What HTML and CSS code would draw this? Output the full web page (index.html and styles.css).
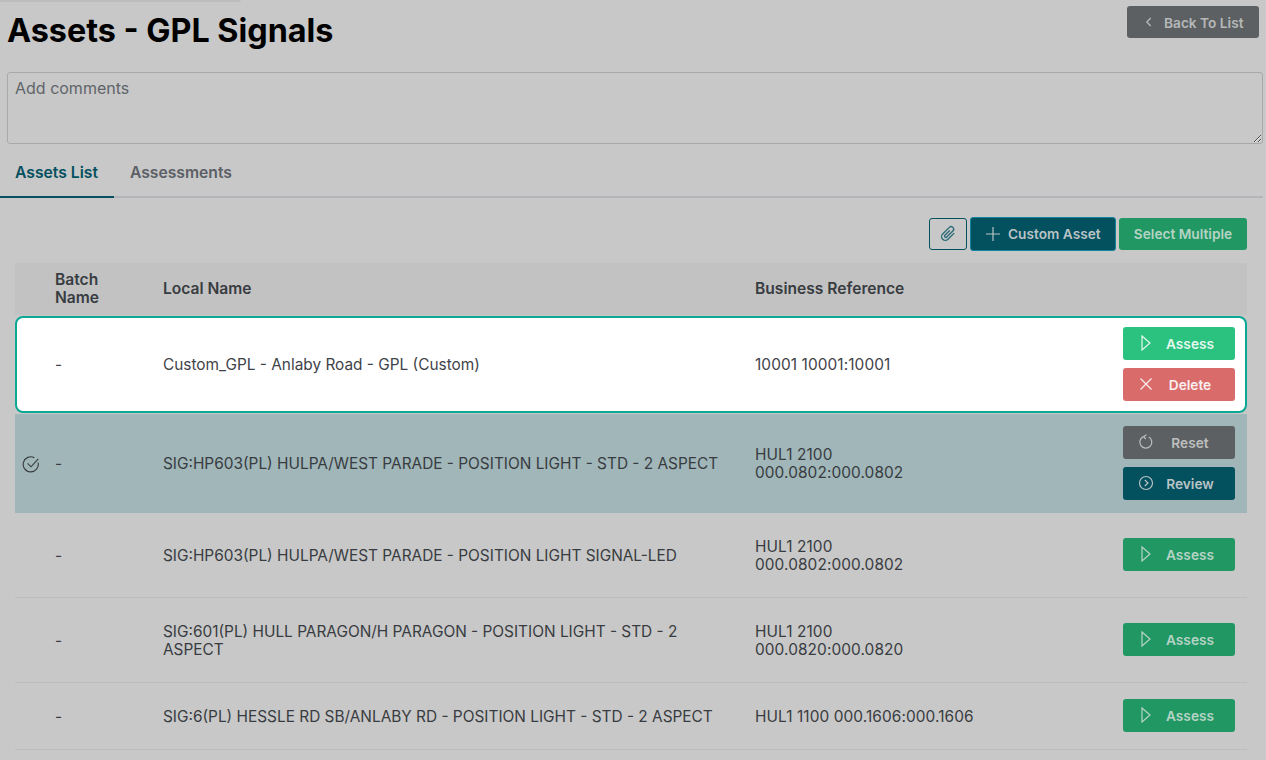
FILE: index.html
```html
<!DOCTYPE html>
<html lang="en">
<head>
<meta charset="utf-8">
<title>Assets - GPL Signals</title>
<link rel="stylesheet" href="styles.css">
</head>
<body>
<div class="topline"></div>
<header class="head">
  <h1>Assets - GPL Signals</h1>
  <button class="btn btn-back"><svg class="ic" viewBox="0 0 16 16"><path d="M10 3.500 5.500 8l4.500 4.500"/></svg><span>Back To List</span></button>
</header>
<div class="comment-wrap"><textarea class="comment" placeholder="Add comments"></textarea></div>
<nav class="tabs">
  <a class="tab active">Assets List</a>
  <a class="tab">Assessments</a>
</nav>
<div class="toolbar">
  <button class="btn btn-clip"><svg viewBox="0 0 16 16" class="clip"><path transform="rotate(45 8 8)" d="M11 4v7a3 3 0 0 1-6 0V3.500a2 2 0 0 1 4 0v7a1 1 0 0 1-2 0V5"/></svg></button>
  <button class="btn btn-custom"><svg class="ic plus" viewBox="0 0 16 16"><path d="M8 1v14M1 8h14"/></svg><span>Custom Asset</span></button>
  <button class="btn btn-multi">Select Multiple</button>
</div>
<section class="table">
  <div class="row row-head">
    <div></div><div>Batch<br>Name</div><div>Local Name</div><div>Business Reference</div><div></div>
  </div>
  <div class="row row-custom">
    <div></div><div>-</div><div>Custom_GPL - Anlaby Road - GPL (Custom)</div><div class="ref">10001 10001:10001</div>
    <div class="actions">
      <button class="btn act btn-assess-on"><svg class="ic" viewBox="0 0 16 16"><path d="M4 1 12 8l-8 7z"/></svg><span>Assess</span></button>
      <button class="btn act btn-delete"><svg class="ic" viewBox="0 0 16 16"><path d="M2.500 2.500l11 11M13.500 2.500l-11 11"/></svg><span>Delete</span></button>
    </div>
  </div>
  <div class="row row-done">
    <div class="check"><svg viewBox="0 0 16 16"><path d="M14.300 6.800A6.700 6.700 0 1 1 11 2.400"/><path d="M5 7.500l3 3 6.500-7"/></svg></div><div>-</div><div>SIG:HP603(PL) HULPA/WEST PARADE - POSITION LIGHT - STD - 2 ASPECT</div><div class="ref">HUL1 2100<br>000.0802:000.0802</div>
    <div class="actions">
      <button class="btn act btn-reset"><svg class="ic" viewBox="0 0 16 16"><path d="M10.800 2.900A6 6 0 1 1 5.400 2.600"/><path d="M8.500 0.800 5.700 2.600 7.800 5"/></svg><span>Reset</span></button>
      <button class="btn act btn-review"><svg class="ic" viewBox="0 0 16 16"><circle cx="8" cy="8" r="6.500"/><path d="M6.800 5 10 8l-3.200 3"/></svg><span>Review</span></button>
    </div>
  </div>
  <div class="row row-a">
    <div></div><div>-</div><div>SIG:HP603(PL) HULPA/WEST PARADE - POSITION LIGHT SIGNAL-LED</div><div class="ref">HUL1 2100<br>000.0802:000.0802</div>
    <div class="actions"><button class="btn act btn-assess"><svg class="ic" viewBox="0 0 16 16"><path d="M4 1 12 8l-8 7z"/></svg><span>Assess</span></button></div>
  </div>
  <div class="row row-a">
    <div></div><div>-</div><div>SIG:601(PL) HULL PARAGON/H PARAGON - POSITION LIGHT - STD - 2 ASPECT</div><div class="ref">HUL1 2100<br>000.0820:000.0820</div>
    <div class="actions"><button class="btn act btn-assess"><svg class="ic" viewBox="0 0 16 16"><path d="M4 1 12 8l-8 7z"/></svg><span>Assess</span></button></div>
  </div>
  <div class="row row-b">
    <div></div><div>-</div><div>SIG:6(PL) HESSLE RD SB/ANLABY RD - POSITION LIGHT - STD - 2 ASPECT</div><div class="ref">HUL1 1100 000.1606:000.1606</div>
    <div class="actions"><button class="btn act btn-assess"><svg class="ic" viewBox="0 0 16 16"><path d="M4 1 12 8l-8 7z"/></svg><span>Assess</span></button></div>
  </div>
</section>
</body>
</html>
```

FILE: styles.css
```css
* { box-sizing: border-box; }
html, body { height: 100%; }
body {
  margin: 0;
  background: #c8c8c8;
  font-family: Inter, "Liberation Sans", sans-serif;
  font-size: 15.400px;
  line-height: 18px;
  color: #383c41;
  overflow: hidden;
}
.topline { width: 241px; height: 2px; background: #bdbdbd; border-radius: 0 0 2px 0; }
.head {
  display: flex;
  justify-content: space-between;
  align-items: flex-start;
  padding: 4px 7px 0 7px;
  height: 70px;
}
h1 {
  margin: 7px 0 0;
  font-size: 32.300px;
  line-height: 36px;
  font-weight: 700;
  color: #000;
}
.btn {
  display: flex;
  align-items: center;
  border: 0;
  border-radius: 3px;
  font-family: inherit;
  font-size: 13.700px;
  font-weight: 600;
  line-height: 16px;
  padding: 0;
}
.ic { width: 16px; height: 16px; flex: none; fill: none; stroke: currentColor; stroke-width: 1.200; }
.btn-back {
  width: 132px;
  height: 32px;
  background: #5c6062;
  color: #b6b8b9;
  padding-left: 15px;
  gap: 8px;
}
.btn-back span { position: relative; top: 1px; }
.btn-back .ic { width: 14px; height: 14px; stroke-width: 1.500; }
.comment-wrap { padding: 0 3px 0 7px; height: 72px; }
.comment {
  display: block;
  width: 100%;
  height: 72px;
  background: transparent;
  border: 1px solid #a9a9a9;
  border-radius: 3px;
  padding: 6px 7px;
  font-family: inherit;
  font-size: 16px;
  line-height: 18px;
  color: #5b6066;
}
.comment::placeholder { color: #5f6468; opacity: 1; }
.tabs {
  display: flex;
  margin: 10px 3px 0 0;
  height: 44px;
  border-bottom: 2px solid #b3b5b8;
}
.tab {
  height: 44px;
  padding: 10px 15px 0;
  margin-right: 1px;
  font-size: 15.700px;
  font-weight: 600;
  line-height: 18px;
  color: #5b6066;
}
.tab.active { color: #03505f; border-bottom: 2px solid #03505f; padding-right: 16px; }
.toolbar {
  display: flex;
  justify-content: flex-end;
  align-items: center;
  gap: 3px;
  padding: 7px 19px 0 0;
  height: 65px;
}
.btn-clip {
  width: 38px;
  height: 32px;
  justify-content: center;
  background: transparent;
  border: 1px solid #03505f;
  color: #03505f;
}
.clip { width: 20px; height: 20px; fill: none; stroke: #2c6b78; stroke-width: 1.100; }
.btn-custom {
  width: 146px;
  height: 34px;
  background: #03505f;
  color: #b9c3c5;
  border: 1px solid #1384a0;
  padding-left: 14px;
  gap: 7px;
}
.btn-custom .plus { stroke-width: 1.200; }
.btn-multi {
  width: 128px;
  height: 32px;
  justify-content: center;
  background: #219864;
  color: #b6d3c5;
}
.table { margin: 0 19px 0 15px; }
.row {
  display: grid;
  grid-template-columns: 40px 108px 592px 1fr 112px;
  align-items: center;
  padding-right: 12px;
}
.row > :nth-child(3) { padding-right: 16px; }
.ref { letter-spacing: 0.100px; }
.row-head {
  background: #c2c2c2;
  height: 52px;
  font-size: 15.600px;
  font-weight: 600;
  color: #383c41;
}
.row-custom {
  background: #fff;
  border: 2px solid #0ba893;
  border-radius: 8px;
  height: 97px;
  margin-top: 1px;
  margin-bottom: 1px;
  grid-template-columns: 38px 108px 592px 1fr 112px;
  padding-right: 10px;
  color: #3f4348;
}
.row-done { background: #a0b6b8; height: 99px; }
.row-a { height: 85px; border-bottom: 1px solid #bcbcbc; padding-top: 1px; }
.row-b { height: 67px; border-bottom: 1px solid #bcbcbc; padding-top: 1px; }
.actions { display: flex; flex-direction: column; gap: 8px; margin-bottom: 2px; }
.row-a .actions, .row-b .actions { margin-bottom: 3px; }
.act {
  width: 112px;
  height: 33px;
  padding-left: 15px;
  position: relative;
}
.act span { position: absolute; left: 0; right: -22px; top: 9px; text-align: center; }
.btn-assess-on { background: #2bc27f; color: #e4f7ee; }
.btn-delete { background: #d96c6b; color: #fbeeee; }
.btn-reset { background: #5c6062; color: #bcbebf; }
.btn-review { background: #03505f; color: #b9c3c5; }
.btn-assess { background: #219864; color: #b6d3c5; }
.check { padding-left: 7px; display: flex; }
.check svg { width: 18px; height: 18px; fill: none; stroke: #383c41; stroke-width: 1; }
```
